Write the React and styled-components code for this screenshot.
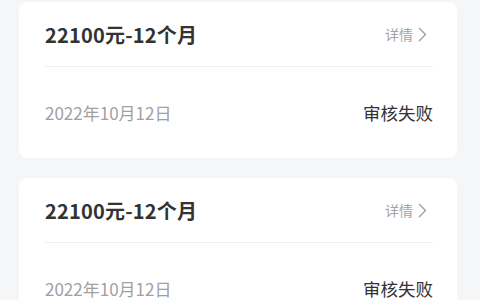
import React from 'react';
import styled, { createGlobalStyle } from 'styled-components';

const GlobalStyle = createGlobalStyle`
    html, body {
        margin: 0;
        padding: 0;
        background: #f5f6f8;
        font-family: "Noto Sans CJK SC", "Noto Sans", sans-serif;
    }
`;

const orders = [
    { id: 1, title: '22100元-12个月', date: '2022年10月12日', status: '审核失败' },
    { id: 2, title: '22100元-12个月', date: '2022年10月12日', status: '审核失败' },
];

function OrderList() {
    return (
        <ListStyled>
            {orders.map(order => (
                <Card key={order.id}>
                    <CardHeader>
                        <Title>{order.title}</Title>
                        <DetailLink>
                            详情
                            <svg width="9" height="15" viewBox="0 0 9 15" fill="none">
                                <path d="M1.3 1.2 L7.5 7.5 L1.3 13.8" stroke="#9e9e9e" strokeWidth="1.3" strokeLinecap="round" strokeLinejoin="round" />
                            </svg>
                        </DetailLink>
                    </CardHeader>
                    <CardBody>
                        <DateText>{order.date}</DateText>
                        <Status>{order.status}</Status>
                    </CardBody>
                </Card>
            ))}
        </ListStyled>
    );
}

export default function App() {
    return (
        <>
            <GlobalStyle />
            <OrderList />
        </>
    );
}

const ListStyled = styled.div`
    display: flex;
    flex-direction: column;
    gap: 20px;
    padding: 2px 23px 20px 19px;
`;

const Card = styled.div`
    background: #fff;
    border-radius: 8px;
    padding: 0 24px 0 26px;
`;

const CardHeader = styled.div`
    display: flex;
    align-items: center;
    justify-content: space-between;
    height: 64px;
    border-bottom: 1px solid #eeeff1;
`;

const Title = styled.div`
    font-size: 20px;
    font-weight: 700;
    color: #333;
    letter-spacing: 0.2px;
`;

const DetailLink = styled.div`
    display: flex;
    align-items: center;
    gap: 5px;
    margin-right: 6px;
    font-size: 14px;
    color: #a3a3a3;
    svg {
        display: block;
    }
`;

const CardBody = styled.div`
    display: flex;
    align-items: center;
    justify-content: space-between;
    height: 91px;
`;

const DateText = styled.div`
    font-size: 17px;
    color: #a0a0a0;
`;

const Status = styled.div`
    font-size: 17.5px;
    color: #333;
`;
